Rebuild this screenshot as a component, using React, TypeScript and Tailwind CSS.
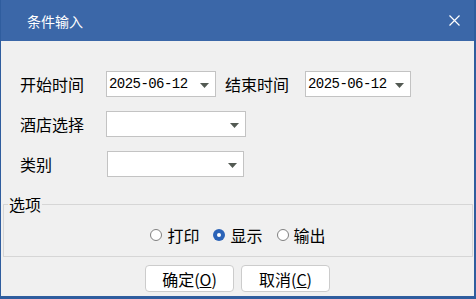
import React, { useState } from 'react';

const Arrow: React.FC = () => (
  <svg width="9" height="5" viewBox="0 0 9 5" className="mt-[2px] shrink-0">
    <polygon points="0,0 9,0 4.5,5" fill="#535a53" />
  </svg>
);

const Combo: React.FC<{ value?: string; w: string; ml?: string }> = ({ value, w, ml = '' }) => (
  <div className={`${w} ${ml} h-[26px] bg-white border border-[#c3c3c3] flex items-center justify-between pl-[2px] pr-[6px]`}>
    <span className="font-['Liberation_Mono',monospace] text-[14px] tracking-[-0.55px] text-black leading-[20px]">{value}</span>
    <Arrow />
  </div>
);

const Radio: React.FC<{ label: string; checked: boolean; onClick: () => void }> = ({ label, checked, onClick }) => (
  <button onClick={onClick} className="flex items-center gap-[5px]">
    {checked ? (
      <span className="w-[12px] h-[12px] rounded-full bg-[#2b63b7] flex items-center justify-center">
        <span className="w-[4px] h-[4px] rounded-full bg-white" />
      </span>
    ) : (
      <span className="w-[12px] h-[12px] rounded-full border border-[#808080] bg-white" />
    )}
    <span className="text-[16px] leading-[20px]">{label}</span>
  </button>
);

export default function App() {
  const [mode, setMode] = useState('显示');

  return (
    <div className="w-[476px] h-[299px] flex flex-col bg-[#f0f0f0] border-l border-r-2 border-b-[3px] border-[#2f5d9e] font-['Noto_Sans_CJK_SC',sans-serif] text-black overflow-hidden">
      {/* title bar */}
      <div className="h-[41px] shrink-0 bg-[#3b67a8] flex items-center justify-between pl-[26px] pr-[14px] text-white">
        <span className="text-[14px] leading-[20px]">条件输入</span>
        <svg width="11" height="11" viewBox="0 0 11 11">
          <path d="M0.5 0.5 L10.5 10.5 M10.5 0.5 L0.5 10.5" stroke="#ffffff" strokeWidth="1.2" />
        </svg>
      </div>

      {/* form */}
      <div className="flex flex-col gap-[14px] pt-[30px] pl-[19px] text-[16px] leading-[20px]">
        <div className="flex items-center">
          <span className="w-[86px]">开始时间</span>
          <Combo value="2025-06-12" w="w-[110px]" />
          <span className="w-[80px] ml-[9px]">结束时间</span>
          <Combo value="2025-06-12" w="w-[106px]" />
        </div>
        <div className="flex items-center">
          <span className="w-[86px]">酒店选择</span>
          <Combo w="w-[140px]" />
        </div>
        <div className="flex items-center">
          <span className="w-[87px]">类别</span>
          <Combo w="w-[137px]" />
        </div>
      </div>

      {/* options */}
      <fieldset className="mt-[17px] ml-[2px] w-[470px] border border-[#d6d6d6] px-0 pb-[11px]">
        <legend className="ml-[4px] px-[1px] text-[16px] leading-[20px]">选项</legend>
        <div className="flex justify-center gap-[14px] pt-[11px]">
          {['打印', '显示', '输出'].map((m) => (
            <Radio key={m} label={m} checked={mode === m} onClick={() => setMode(m)} />
          ))}
        </div>
      </fieldset>

      {/* buttons */}
      <div className="flex justify-center gap-[7px] mt-[8px]">
        <button className="w-[89px] h-[27px] bg-white border border-[#cccccc] rounded-[4px] text-[16px] leading-[20px]">
          确定(<u>O</u>)
        </button>
        <button className="w-[89px] h-[27px] bg-white border border-[#cccccc] rounded-[4px] text-[16px] leading-[20px]">
          取消(<u>C</u>)
        </button>
      </div>
    </div>
  );
}
